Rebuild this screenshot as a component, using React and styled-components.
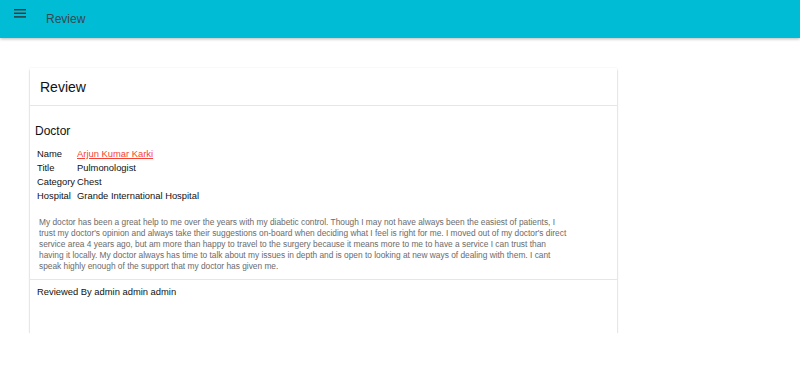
import styled, { createGlobalStyle } from "styled-components";

const GlobalStyle = createGlobalStyle`
  html, body {
    margin: 0;
    padding: 0;
    background: #fff;
    font-family: "Liberation Sans", Arial, sans-serif;
  }
`;

const doctor = {
  name: "Arjun Kumar Karki",
  title: "Pulmonologist",
  category: "Chest",
  hospital: "Grande International Hospital",
};

const reviewText =
  "My doctor has been a great help to me over the years with my diabetic control. Though I may not have always been the easiest of patients, I trust my doctor's opinion and always take their suggestions on-board when deciding what I feel is right for me. I moved out of my doctor's direct service area 4 years ago, but am more than happy to travel to the surgery because it means more to me to have a service I can trust than having it locally. My doctor always has time to talk about my issues in depth and is open to looking at new ways of dealing with them. I cant speak highly enough of the support that my doctor has given me.";

const App = () => {
  return (
    <>
      <GlobalStyle />
      <TopBar>
        <MenuButton aria-label="menu">
          <svg width="12" height="9" viewBox="0 0 12 9">
            <rect x="0" y="0" width="12" height="1.4" fill="#333" />
            <rect x="0" y="3.6" width="12" height="1.4" fill="#333" />
            <rect x="0" y="7.2" width="12" height="1.4" fill="#333" />
          </svg>
        </MenuButton>
        <BarTitle>Review</BarTitle>
      </TopBar>
      <Page>
        <Card>
          <CardHeader>Review</CardHeader>
          <CardBody>
            <SectionTitle>Doctor</SectionTitle>
            <InfoTable>
              <tbody>
                <tr>
                  <Label>Name</Label>
                  <td>
                    <DoctorLink href="#">{doctor.name}</DoctorLink>
                  </td>
                </tr>
                <tr>
                  <Label>Title</Label>
                  <td>{doctor.title}</td>
                </tr>
                <tr>
                  <Label>Category</Label>
                  <td>{doctor.category}</td>
                </tr>
                <tr>
                  <Label>Hospital</Label>
                  <td>{doctor.hospital}</td>
                </tr>
              </tbody>
            </InfoTable>
            <ReviewText>{reviewText}</ReviewText>
          </CardBody>
          <CardFooter>Reviewed By admin admin admin</CardFooter>
        </Card>
      </Page>
    </>
  );
};

const TopBar = styled.header`
  height: 38px;
  background: #00bcd4;
  display: flex;
  align-items: center;
  box-shadow: 0 1px 3px rgba(0, 0, 0, 0.28);
  position: relative;
  z-index: 1;
`;

const MenuButton = styled.div`
  width: 12px;
  height: 9px;
  margin: -11px 0 0 14px;
  display: flex;
`;

const BarTitle = styled.div`
  margin-left: 20px;
  font-size: 12px;
  color: #37474f;
`;

const Page = styled.main`
  padding: 30px 0 0 30px;
`;

const Card = styled.section`
  width: 587px;
  height: 265px;
  background: #fff;
  box-shadow: 0 2px 2px rgba(0, 0, 0, 0.22), 0 0 1px rgba(0, 0, 0, 0.14);
  display: flex;
  flex-direction: column;
`;

const CardHeader = styled.div`
  height: 36px;
  padding-left: 10px;
  padding-top: 1px;
  display: flex;
  align-items: center;
  font-size: 14px;
  color: #111;
  border-bottom: 1px solid #e6e6e6;
`;

const CardBody = styled.div`
  padding: 18px 5px 0 5px;
  border-bottom: 1px solid #e6e6e6;
`;

const SectionTitle = styled.div`
  font-size: 12px;
  color: #111;
  line-height: 14px;
  margin-bottom: 9px;
`;

const InfoTable = styled.table`
  border-collapse: collapse;
  font-size: 9.4px;
  color: #111;
  margin-left: 1px;

  td {
    padding: 0 1px;
    height: 14px;
    line-height: 14px;
    vertical-align: middle;
  }
`;

const Label = styled.td`
  padding-right: 2px;
`;

const DoctorLink = styled.a`
  color: #f44336;
  text-decoration: underline;
`;

const ReviewText = styled.p`
  margin: 14px 0 0 4px;
  width: 530px;
  font-size: 8.35px;
  line-height: 11px;
  color: #6b6b6b;
  padding-bottom: 7px;
`;

const CardFooter = styled.div`
  padding: 6px 7px;
  font-size: 9.4px;
  color: #111;
`;

export default App;
